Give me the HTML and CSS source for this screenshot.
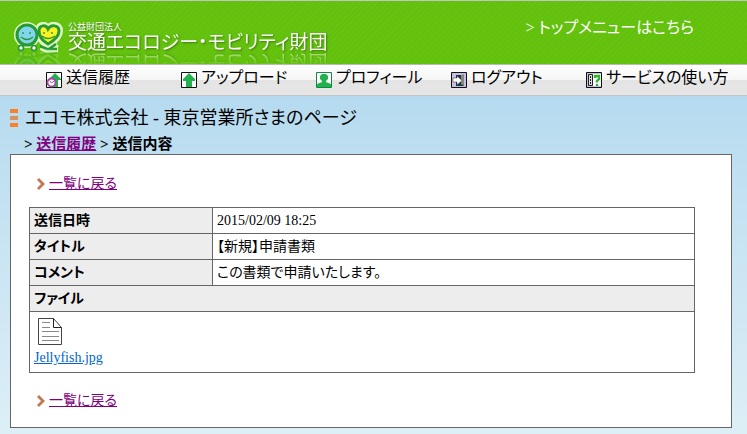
FILE: index.html
```html
<!DOCTYPE html>
<html lang="ja">
<head>
<meta charset="utf-8">
<title>送信内容</title>
<link rel="stylesheet" href="styles.css">
</head>
<body>
<header class="header">
  <div class="brand">
    <svg class="brand-mark" viewBox="0 0 50 42" width="50" height="42" aria-hidden="true">
      <g id="mark">
        <g fill="none" stroke="#dff6c4" stroke-width="6">
          <circle cx="13" cy="13" r="10"/>
          <path d="M34 24C27 20 24 15 24 9C24 2 32 1 34 6C37 1 46 2 46 9C46 15 40 20 34 24Z"/>
          <path d="M27 25L33 28L44 27M43 22L36 28"/>
        </g>
        <circle cx="13" cy="13" r="10" fill="#83d4f0" stroke="#259b32" stroke-width="3"/>
        <path d="M34 22C27 18 25 14 25 9C25 3 32 2 34 7C37 2 45 3 45 9C45 14 41 18 34 22Z" fill="#fdf221" stroke="#259b32" stroke-width="3"/>
        <path d="M9 10v2M16 10v2M7 15Q13 20 19 15M30 10v2M38 10v2M28 14Q34 19 41 14" fill="none" stroke="#259b32" stroke-width="1.4"/>
        <path d="M26 24L33 27L43 27M42 22L35 27" fill="none" stroke="#259b32" stroke-width="2.5"/>
        <g fill="#fff" stroke="#259b32" stroke-width="1.6"><circle cx="7" cy="26" r="2.5"/><circle cx="20" cy="26" r="2.5"/></g>
      </g>
      <use href="#mark" transform="matrix(1 0 0 -1 0 58)" opacity=".18"/>
    </svg>
    <div class="brand-text">
      <span class="brand-kind">公益財団法人</span>
      <span class="brand-name">交通エコロジー・モビリティ財団</span>
    </div>
  </div>
  <a class="top-link" href="#">&gt; トップメニューはこちら</a>
</header>
<nav class="nav">
  <a class="nav-item" href="#">
    <svg class="icon" viewBox="0 0 16 16" width="16" height="16" aria-hidden="true"><path fill="#fff" stroke="#111" d="M.5.5h15v15H.5z"/><path fill="#22b14c" d="M9 1l6 6v1h-3v7H7V8H4V6z"/><circle cx="5.500" cy="10.500" r="4" fill="#fff" stroke="#a349a4" stroke-width="1.800"/><path d="M3.500 8.500l2 2.500L8 9" fill="none" stroke="#a349a4"/></svg>
    送信履歴</a>
  <a class="nav-item" href="#">
    <svg class="icon" viewBox="0 0 16 16" width="16" height="16" aria-hidden="true"><path fill="#fff" stroke="#111" d="M.5.5h15v15H.5z"/><path fill="#22b14c" d="M8 1l6 6v2h-3v6H5V9H2V7z"/></svg>
    アップロード</a>
  <a class="nav-item" href="#">
    <svg class="icon" viewBox="0 0 16 16" width="16" height="16" aria-hidden="true"><path fill="#fff" stroke="#0d8a45" d="M.5.5h15v15H.5z"/><path fill="#22b14c" d="M6 2h4l2 2v3l-2 2v1l5 2v3H1v-3l5-2V9L4 7V4z"/></svg>
    プロフィール</a>
  <a class="nav-item" href="#">
    <svg class="icon" viewBox="0 0 16 16" width="16" height="16" aria-hidden="true"><path fill="#c8bfe7" stroke="#111" d="M.5.5h15v15H.5z"/><path fill="#173c42" d="M5 3h8v11H5z"/><path fill="#888" d="M10 3l3-1v12l-3-2z"/><path fill="#fff" stroke="#333" stroke-width=".5" d="M2 6h4V4l5 4.500L6 13v-3H2z"/></svg>
    ログアウト</a>
  <a class="nav-item" href="#">
    <svg class="icon" viewBox="0 0 16 16" width="16" height="16" aria-hidden="true"><path fill="#c8bfe7" stroke="#111" d="M.5.5h15v15H.5z"/><path fill="#ddd" stroke="#222" d="M2.500 2.500h4v11h-4z"/><path d="M4.500 4v8" stroke="#222" stroke-dasharray="2 1"/><path fill="#fff" d="M7 2h8v12H7z"/><path d="M9 6V4h4v3l-2 2v1.500M11 12v2" fill="none" stroke="#2cb62c" stroke-width="2.400"/></svg>
    サービスの使い方</a>
</nav>
<main class="main">
  <h1 class="page-title">エコモ株式会社 - 東京営業所さまのページ</h1>
  <p class="crumbs">&gt; <a href="#">送信履歴</a> &gt; 送信内容</p>
  <section class="panel">
    <p class="back"><svg viewBox="0 0 8 12" width="8" height="12" aria-hidden="true"><path d="M1 1l5 5-5 5" fill="none" stroke="#bf7850" stroke-width="2.800"/></svg><a href="#">一覧に戻る</a></p>
    <table class="detail">
      <tr><th scope="row">送信日時</th><td>2015/02/09 18:25</td></tr>
      <tr><th scope="row">タイトル</th><td>【新規】申請書類</td></tr>
      <tr><th scope="row">コメント</th><td>この書類で申請いたします。</td></tr>
      <tr><th colspan="2">ファイル</th></tr>
      <tr><td class="file-cell" colspan="2">
        <a class="file" href="#"><svg viewBox="0 0 32 32" width="32" height="32" aria-hidden="true"><path d="M4.500 2.500h15l8 9v17h-23z" fill="#fff" stroke="#444"/><path d="M19.500 2.500v9h8" fill="none" stroke="#222"/><path d="M8 6.500h8M8 11.500h8M8 15.500h17M8 20.500h17M8 24.500h17" stroke="#888"/></svg>Jellyfish.jpg</a>
      </td></tr>
    </table>
    <p class="back"><svg viewBox="0 0 8 12" width="8" height="12" aria-hidden="true"><path d="M1 1l5 5-5 5" fill="none" stroke="#bf7850" stroke-width="2.800"/></svg><a href="#">一覧に戻る</a></p>
  </section>
</main>
</body>
</html>
```
FILE: styles.css
```css
* { box-sizing: border-box; }

body {
  margin: 0;
  min-height: 100vh;
  background: linear-gradient(#b5daef 96px, #bfdff1 160px, #dceef6 420px);
  color: #000;
  font-family: "Liberation Serif", "Noto Sans CJK JP", serif;
  font-size: 14px;
  line-height: 20px;
  font-feature-settings: "palt";
}

.header {
  display: flex;
  justify-content: space-between;
  height: 65px;
  padding: 0 53px 0 14px;
  border-top: 1px solid #c4c4c4;
  border-bottom: 1px solid #b9bcb4;
  background: repeating-linear-gradient(135deg, #63c10d 0 3px, #67c412 3px 4px);
  color: #fff;
  overflow: hidden;
}

.brand {
  display: flex;
  gap: 4px;
  padding-top: 21px;
  font-family: "Liberation Sans", "Noto Sans CJK JP", sans-serif;
}

.brand-text {
  display: flex;
  flex-direction: column;
  text-shadow: 1px 1px 2px #397a08;
}

.brand-kind {
  font-size: 9px;
  line-height: 10px;
}

.brand-name {
  font-size: 19px;
  line-height: 22px;
  white-space: nowrap;
  -webkit-box-reflect: below -4px linear-gradient(transparent 30%, rgba(255, 255, 255, 0.6));
}

.top-link {
  padding-top: 17px;
  color: #fff;
  font-size: 16px;
  text-decoration: none;
}

.nav {
  display: flex;
  height: 31px;
  padding-left: 46px;
  border-bottom: 1px solid #c4c4c4;
  background: linear-gradient(#fff, #f5f5f5 50%, #e4e4e4 50%, #e6e6e6);
  font-size: 16px;
}

.nav-item {
  display: flex;
  flex: 0 0 135px;
  gap: 4px;
  padding-top: 3px;
  color: #000;
  text-decoration: none;
  white-space: nowrap;
}

.icon {
  flex: none;
  margin-top: 4px;
}

.main {
  padding: 12px 15px 5px 10px;
}

.page-title {
  display: flex;
  align-items: center;
  gap: 7px;
  margin: 0;
  font-size: 18px;
  font-weight: 400;
  line-height: 20px;
}

.page-title::before {
  content: "";
  width: 8px;
  height: 18px;
  background: linear-gradient(#ff7f27 4px, transparent 4px 7px, #d9935f 7px 11px, transparent 11px 14px, #ff7f27 14px);
}

.crumbs {
  margin: 6px 0 0;
  padding-left: 14px;
  font-size: 15px;
  font-weight: 700;
}

a { color: #800080; }

.panel {
  padding: 19px 36px 16px 18px;
  border: 1px solid #666;
  background: #fff;
}

.back {
  display: flex;
  align-items: center;
  gap: 4px;
  margin: 0;
  padding-left: 8px;
}

.detail {
  width: 100%;
  margin: 13px 0 18px;
  border-collapse: collapse;
}

.detail th,
.detail td {
  padding: 3px 4px 2px;
  border: 1px solid #666;
  text-align: left;
}

.detail th {
  width: 183px;
  background: #ededed;
}

.detail .file-cell {
  padding: 4px;
}

.file {
  display: inline-flex;
  flex-direction: column;
  color: #0066cc;
}
```
